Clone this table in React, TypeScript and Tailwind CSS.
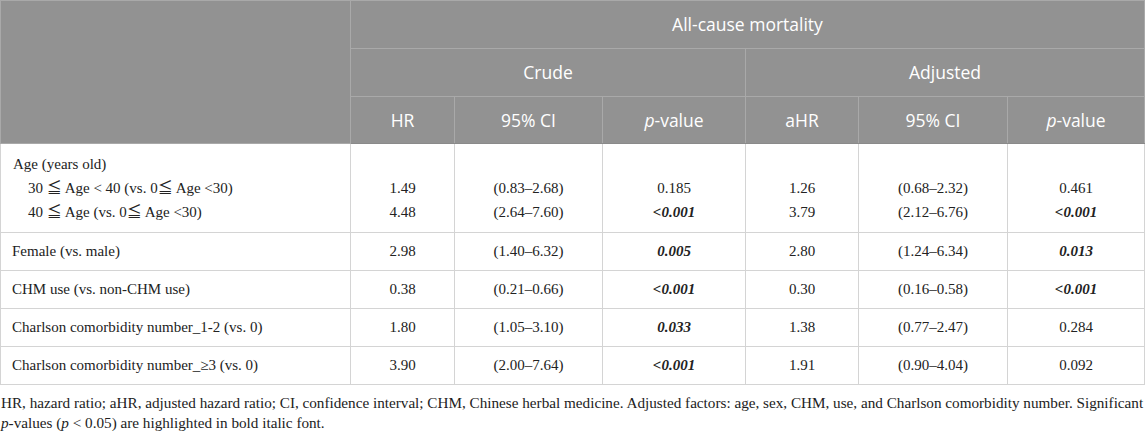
import React from "react";

const serif = { fontFamily: '"Liberation Serif", "Noto Sans CJK JP", serif' };

type Row = {
  label: React.ReactNode;
  v: [string, string, string, string, string, string];
  sig: [boolean, boolean];
};

const rows: Row[] = [
  { label: "Female (vs. male)", v: ["2.98", "(1.40–6.32)", "0.005", "2.80", "(1.24–6.34)", "0.013"], sig: [true, true] },
  { label: "CHM use (vs. non-CHM use)", v: ["0.38", "(0.21–0.66)", "<0.001", "0.30", "(0.16–0.58)", "<0.001"], sig: [true, true] },
  { label: "Charlson comorbidity number_1-2 (vs. 0)", v: ["1.80", "(1.05–3.10)", "0.033", "1.38", "(0.77–2.47)", "0.284"], sig: [true, false] },
  { label: "Charlson comorbidity number_≥3 (vs. 0)", v: ["3.90", "(2.00–7.64)", "<0.001", "1.91", "(0.90–4.04)", "0.092"], sig: [true, false] },
];

function P({ v, sig }: { v: string; sig: boolean }) {
  return sig ? <span className="font-bold italic">{v}</span> : <span>{v}</span>;
}

const th = "font-normal text-white text-center align-middle";
const td = "border border-[#d4d4d4] text-center align-middle py-[7px] leading-[23px]";

export default function App() {
  return (
    <div className="w-[1145px] h-[431px] bg-white text-[#222]">
      <table className="w-[1144px] table-fixed border-collapse" style={serif}>
        <colgroup>
          <col className="w-[350px]" />
          <col className="w-[104px]" />
          <col className="w-[148px]" />
          <col className="w-[143px]" />
          <col className="w-[113px]" />
          <col className="w-[149px]" />
          <col className="w-[137px]" />
        </colgroup>
        <thead className="bg-[#929292] text-[17.5px]" style={{ fontFamily: '"Open Sans", sans-serif' }}>
          <tr className="h-[48px]">
            <th rowSpan={3} className="border border-[#a9a9a9]" />
            <th colSpan={6} className={`${th} border border-[#a9a9a9]`}>All-cause mortality</th>
          </tr>
          <tr className="h-[48px]">
            <th colSpan={3} className={`${th} border border-[#a9a9a9]`}>Crude</th>
            <th colSpan={3} className={`${th} border border-[#a9a9a9]`}>Adjusted</th>
          </tr>
          <tr className="h-[47px]">
            <th className={`${th} border border-[#a9a9a9] border-b-[#8a8a8a]`}>HR</th>
            <th className={`${th} border border-[#a9a9a9] border-b-[#8a8a8a]`}>95% CI</th>
            <th className={`${th} border border-[#a9a9a9] border-b-[#8a8a8a]`}><i>p</i>-value</th>
            <th className={`${th} border border-[#a9a9a9] border-b-[#8a8a8a]`}>aHR</th>
            <th className={`${th} border border-[#a9a9a9] border-b-[#8a8a8a]`}>95% CI</th>
            <th className={`${th} border border-[#a9a9a9] border-b-[#8a8a8a]`}><i>p</i>-value</th>
          </tr>
        </thead>
        <tbody className="text-[15px]">
          <tr>
            <td className="border border-[#d4d4d4] py-[8px] pl-[12px] leading-[24px] text-left align-top">
              <div>Age (years old)</div>
              <div className="pl-[15px]">30 ≦ Age &lt; 40 (vs. 0≦ Age &lt;30)</div>
              <div className="pl-[15px]">40 ≦ Age (vs. 0≦ Age &lt;30)</div>
            </td>
            {[
              ["1.49", "4.48"],
              ["(0.83–2.68)", "(2.64–7.60)"],
              ["0.185", "<0.001"],
              ["1.26", "3.79"],
              ["(0.68–2.32)", "(2.12–6.76)"],
              ["0.461", "<0.001"],
            ].map((pair, i) => (
              <td key={i} className="border border-[#d4d4d4] py-[8px] leading-[24px] text-center align-top">
                <div>&nbsp;</div>
                <div>{pair[0]}</div>
                <div>{i === 2 || i === 5 ? <P v={pair[1]} sig /> : pair[1]}</div>
              </td>
            ))}
          </tr>
          {rows.map((r, idx) => (
            <tr key={idx}>
              <td className={`${td} text-left pl-[11px]`}>{r.label}</td>
              <td className={td}>{r.v[0]}</td>
              <td className={td}>{r.v[1]}</td>
              <td className={td}><P v={r.v[2]} sig={r.sig[0]} /></td>
              <td className={td}>{r.v[3]}</td>
              <td className={td}>{r.v[4]}</td>
              <td className={td}><P v={r.v[5]} sig={r.sig[1]} /></td>
            </tr>
          ))}
        </tbody>
      </table>
      <p className="mt-[8px] text-[15.2px] leading-[20px] pl-[1px] text-[#222]" style={serif}>
        HR, hazard ratio; aHR, adjusted hazard ratio; CI, confidence interval; CHM, Chinese herbal medicine. Adjusted factors: age, sex, CHM, use, and Charlson comorbidity number. Significant{" "}
        <i>p</i>-values (<i>p</i> &lt; 0.05) are highlighted in bold italic font.
      </p>
    </div>
  );
}
